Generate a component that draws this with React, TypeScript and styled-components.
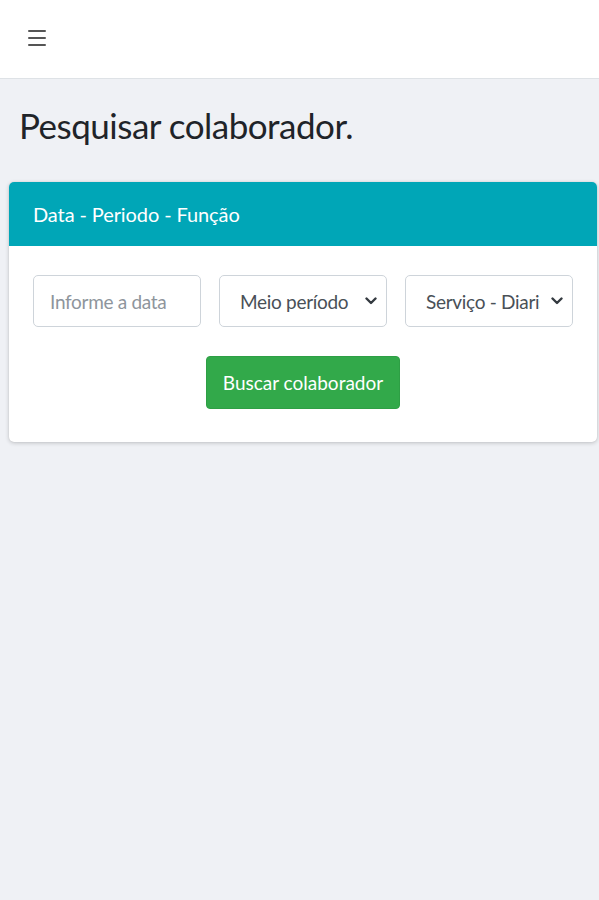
import styled, { createGlobalStyle } from "styled-components";

const GlobalStyle = createGlobalStyle`
  html, body {
    margin: 0;
    padding: 0;
    background: #eff1f5;
    font-family: "Lato", "Liberation Sans", sans-serif;
  }
  * {
    box-sizing: border-box;
  }
`;

const Chevron = () => (
  <svg width="12" height="8" viewBox="0 0 12 8" fill="none">
    <path
      d="M1.5 1.5L6 6L10.5 1.5"
      stroke="#343a40"
      strokeWidth="2.4"
      strokeLinecap="round"
      strokeLinejoin="round"
    />
  </svg>
);

export default function App() {
  return (
    <>
      <GlobalStyle />
      <Page>
        <Navbar>
          <MenuButton aria-label="menu">
            <MenuLine />
            <MenuLine />
            <MenuLine />
          </MenuButton>
        </Navbar>
        <Content>
          <Title>Pesquisar colaborador.</Title>
          <Card>
            <CardHeader>Data - Periodo - Função</CardHeader>
            <CardBody>
              <FieldRow>
                <TextInput placeholder="Informe a data" />
                <SelectWrap>
                  <Select defaultValue="meio">
                    <option value="meio">Meio período</option>
                    <option value="integral">Período integral</option>
                  </Select>
                  <ArrowSlot>
                    <Chevron />
                  </ArrowSlot>
                </SelectWrap>
                <SelectWrap>
                  <Select defaultValue="diarista">
                    <option value="diarista">Serviço - Diarista</option>
                  </Select>
                  <ArrowSlot>
                    <Chevron />
                  </ArrowSlot>
                </SelectWrap>
              </FieldRow>
              <ButtonRow>
                <SearchButton>Buscar colaborador</SearchButton>
              </ButtonRow>
            </CardBody>
          </Card>
        </Content>
      </Page>
    </>
  );
}

const Page = styled.div`
  min-height: 900px;
  background: #eff1f5;
`;

const Navbar = styled.header`
  height: 79px;
  background: #fff;
  border-bottom: 1px solid #dee2e6;
  display: flex;
  align-items: center;
  padding-left: 28px;
`;

const MenuButton = styled.button`
  border: none;
  background: none;
  padding: 0;
  width: 18px;
  height: 16px;
  display: flex;
  flex-direction: column;
  justify-content: space-between;
  margin-top: -2px;
  cursor: pointer;
`;

const MenuLine = styled.span`
  display: block;
  height: 2px;
  width: 18px;
  background: #555;
  border-radius: 1px;
`;

const Content = styled.main`
  padding: 22px 2px 0 9px;
`;

const Title = styled.h1`
  margin: 0 0 33px 10px;
  font-size: 35px;
  font-weight: 400;
  line-height: 48px;
  color: #1f2429;
  letter-spacing: -0.5px;
`;

const Card = styled.section`
  background: #fff;
  border-radius: 5px;
  box-shadow: 0 0 1px rgba(0, 0, 0, 0.13), 0 1px 4px rgba(0, 0, 0, 0.2);
  overflow: hidden;
`;

const CardHeader = styled.div`
  background: #00a6b7;
  color: #fff;
  height: 64px;
  display: flex;
  align-items: center;
  padding-left: 24px;
  font-size: 20px;
  letter-spacing: -0.1px;
  font-weight: 400;
`;

const CardBody = styled.div`
  padding: 29px 24px 33px;
  display: flex;
  flex-direction: column;
  gap: 29px;
`;

const FieldRow = styled.div`
  display: grid;
  grid-template-columns: repeat(3, 1fr);
  gap: 18px;
`;

const fieldBase = `
  width: 100%;
  height: 52px;
  border: 1px solid #ced4da;
  border-radius: 5px;
  background: #fff;
  font-family: "Lato", "Liberation Sans", sans-serif;
  font-size: 19px;
  letter-spacing: -0.3px;
  color: #495057;
  outline: none;
`;

const TextInput = styled.input`
  ${fieldBase}
  padding: 0 16px;
  &::placeholder {
    color: #8e959c;
  }
`;

const SelectWrap = styled.div`
  position: relative;
`;

const Select = styled.select`
  ${fieldBase}
  appearance: none;
  padding: 0 32px 0 20px;
`;

const ArrowSlot = styled.span`
  position: absolute;
  right: 10px;
  top: 50%;
  transform: translateY(-50%);
  display: flex;
  pointer-events: none;
`;

const ButtonRow = styled.div`
  display: flex;
  justify-content: center;
`;

const SearchButton = styled.button`
  height: 53px;
  padding: 0 16px;
  background: #32a94a;
  color: #fff;
  border: 1px solid #2e9f45;
  border-radius: 4px;
  font-family: "Lato", "Liberation Sans", sans-serif;
  font-size: 19px;
  cursor: pointer;
`;
